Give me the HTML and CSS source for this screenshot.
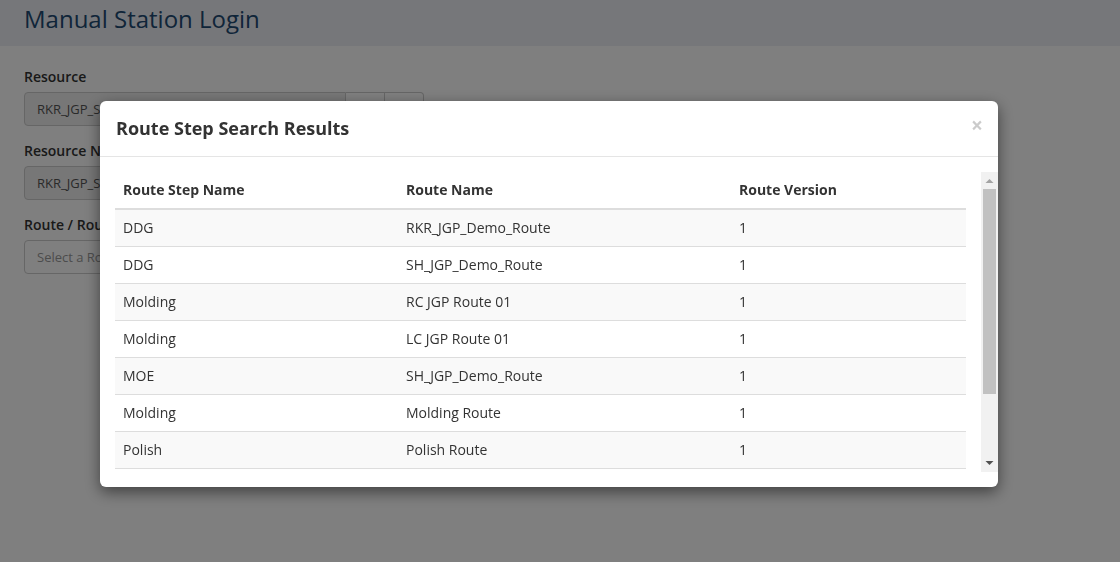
FILE: index.html
```html
<!DOCTYPE html>
<html>
<head>
<meta charset="utf-8">
<link rel="stylesheet" href="styles.css">
</head>
<body>
<div class="page-header"><h1>Manual Station Login</h1></div>
<div class="form">
  <div class="group">
    <label>Resource</label>
    <div class="input-group">
      <div class="input readonly short">RKR_JGP_Station_01</div>
      <button class="btn"></button>
      <button class="btn last"></button>
    </div>
  </div>
  <div class="group">
    <label>Resource Name</label>
    <div class="input readonly">RKR_JGP_Station_01</div>
  </div>
  <div class="group">
    <label>Route / Route Step</label>
    <div class="input placeholder">Select a Route Step</div>
  </div>
</div>

<div class="backdrop"></div>
<div class="modal-wrap">
  <div class="modal">
    <div class="modal-header">
      <h4>Route Step Search Results</h4>
      <span class="close">×</span>
    </div>
    <div class="modal-body">
      <div class="scroller">
        <table>
          <thead>
            <tr><th class="c1">Route Step Name</th><th class="c2">Route Name</th><th>Route Version</th></tr>
          </thead>
          <tbody>
            <tr><td>DDG</td><td>RKR_JGP_Demo_Route</td><td>1</td></tr>
            <tr><td>DDG</td><td>SH_JGP_Demo_Route</td><td>1</td></tr>
            <tr><td>Molding</td><td>RC JGP Route 01</td><td>1</td></tr>
            <tr><td>Molding</td><td>LC JGP Route 01</td><td>1</td></tr>
            <tr><td>MOE</td><td>SH_JGP_Demo_Route</td><td>1</td></tr>
            <tr><td>Molding</td><td>Molding Route</td><td>1</td></tr>
            <tr><td>Polish</td><td>Polish Route</td><td>1</td></tr>
            <tr><td>Assembly</td><td>Assembly Route</td><td>1</td></tr>
            <tr><td>Packing</td><td>Packing Route</td><td>1</td></tr>
          </tbody>
        </table>
      </div>
      <div class="scrollbar">
        <svg width="17" height="300" viewBox="0 0 17 300">
          <rect x="0" y="0" width="17" height="300" fill="#f1f1f1"/>
          <polygon points="4.5,11 8.5,7 12.5,11" fill="#a3a3a3"/>
          <rect x="2" y="17" width="13" height="205" fill="#c1c1c1"/>
          <polygon points="4.5,289 12.5,289 8.5,293" fill="#505050"/>
        </svg>
      </div>
    </div>
  </div>
</div>
</body>
</html>
```
FILE: styles.css
```css
* { box-sizing: border-box; }
html, body { margin: 0; padding: 0; }
body {
  font-family: "Open Sans", "Liberation Sans", sans-serif;
  font-size: 14px;
  line-height: 20px;
  color: #333;
  background: #fff;
  width: 1120px;
  height: 562px;
  overflow: hidden;
}
.page-header {
  height: 46px;
  background: #eceef4;
  padding-left: 24px;
  display: flex;
  align-items: center;
}
.page-header h1 {
  margin: 0;
  font-size: 24px;
  font-weight: 400;
  color: #1f4a72;
  line-height: 30px;
  position: relative;
  top: -4px;
}
.form { padding: 21px 24px 0; }
.group { margin-bottom: 15px; }
.group label {
  display: block;
  font-weight: 600;
  line-height: 20px;
  margin-bottom: 5px;
  color: #333;
}
.input-group { display: flex; width: 400px; }
.input {
  width: 400px;
  height: 34px;
  border: 1px solid #ccc;
  border-radius: 4px;
  padding: 6px 12px;
  font-size: 13px;
  line-height: 20px;
  color: #555;
  background: #fff;
}
.input.short { width: 322px; border-radius: 4px 0 0 4px; }
.input.readonly { background: #eee; }
.input.placeholder { color: #999; }
.btn {
  width: 39px;
  height: 34px;
  border: 1px solid #ccc;
  border-left: none;
  background: #fff;
  padding: 0;
}
.btn.last { border-radius: 0 4px 4px 0; }

.backdrop {
  position: fixed;
  inset: 0;
  background: rgba(0,0,0,.5);
}
.modal-wrap {
  position: fixed;
  inset: 0;
  padding: 101px 0 0 100px;
}
.modal {
  width: 898px;
  background: #fff;
  border-radius: 6px;
  box-shadow: 0 5px 15px rgba(0,0,0,.5);
  overflow: hidden;
}
.modal-header {
  height: 56px;
  border-bottom: 1px solid #e5e5e5;
  padding: 0 15px 0 16px;
  display: flex;
  align-items: center;
  justify-content: space-between;
}
.modal-header h4 {
  margin: 0;
  font-size: 18px;
  font-weight: 700;
  color: #333;
  line-height: 26px;
  position: relative;
  top: -1px;
}
.close {
  font-size: 21px;
  font-weight: 700;
  color: #000;
  opacity: .2;
  line-height: 1;
  margin-top: -6px;
}
.modal-body {
  position: relative;
  padding: 15px 0 15px 15px;
}
.scroller {
  height: 300px;
  overflow: hidden;
  padding-right: 32px;
}
.scrollbar {
  position: absolute;
  top: 15px;
  right: 0;
  width: 17px;
  height: 300px;
}
.scrollbar svg { display: block; }
table {
  width: 100%;
  border-collapse: collapse;
  margin-bottom: 20px;
}
th, td {
  text-align: left;
  padding: 8px;
  line-height: 20px;
  height: 37px;
}
th {
  font-weight: 700;
  border-bottom: 2px solid #ddd;
  color: #333;
}
td { border-top: 1px solid #ddd; }
tbody tr:last-child td { border-bottom: 1px solid #ddd; }
th.c1 { width: 283px; }
th.c2 { width: 333px; }
tbody tr:nth-child(odd) td { background: #f9f9f9; }
```
